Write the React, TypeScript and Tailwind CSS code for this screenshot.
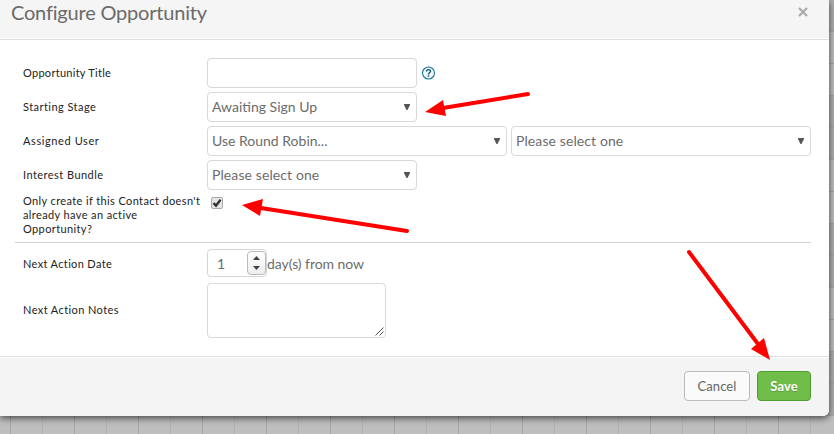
import type { ReactNode } from "react";

const sans = "font-['Lato','Noto_Sans',sans-serif]";

function Label({ children, className = "tracking-[0.38px]" }: { children: ReactNode; className?: string }) {
  return <div className={`w-[184px] shrink-0 whitespace-nowrap text-[11px] leading-[14px] text-[#222] ${className}`}>{children}</div>;
}

function Select({ value, className, tracking }: { value: string; className: string; tracking: string }) {
  return (
    <div className={`flex h-[30px] shrink-0 items-center justify-between rounded-[4px] border border-[#d9d9d9] bg-white pl-1 pr-[6px] ${className}`}>
      <span className={`whitespace-nowrap text-[14px] leading-[20px] text-[#6c6c6c] ${tracking}`}>{value}</span>
      <svg width="6" height="6" viewBox="0 0 6 6" className="-mt-px" aria-hidden="true">
        <path d="M0 0h6v1L3.5 6H2.5L0 1z" fill="#555" />
      </svg>
    </div>
  );
}

function Row({ children, className = "h-[30px]" }: { children: ReactNode; className?: string }) {
  return <div className={`flex items-center pl-[23px] ${className}`}>{children}</div>;
}

function Backdrop() {
  return (
    <svg className="absolute inset-0" width="834" height="434" aria-hidden="true">
      <rect width="834" height="434" fill="#afafaf" />
      {[31, 159, 287, 415].map((y) => (
        <rect key={y} y={y} width="834" height="64" fill="#bebebe" />
      ))}
      {Array.from({ length: 13 }, (_, i) => (
        <rect key={i} x="820" y={31 + i * 32} width="14" height="1" fill="#a6a6a6" />
      ))}
      {Array.from({ length: 26 }, (_, i) => (
        <rect key={i} x={10 + i * 32} y="416" width="1" height="18" fill={i % 2 ? "#b2b2b2" : "#a6a6a6"} />
      ))}
    </svg>
  );
}

function Arrows() {
  return (
    <svg className="pointer-events-none absolute inset-0" width="834" height="434" aria-hidden="true">
      <g stroke="#fe0000" strokeWidth="4" strokeLinecap="round" fill="#fe0000">
        <path d="M528 94L443 108" />
        <path d="M425 112L443 100L446 116Z" stroke="none" />
        <path d="M407 231L261 208" />
        <path d="M242 205L263 199L260 216Z" stroke="none" />
        <path d="M689 252L758 344" />
        <path d="M770 360L751 349L764 338Z" stroke="none" />
      </g>
    </svg>
  );
}

export default function App() {
  return (
    <div className={`relative h-[434px] w-[834px] overflow-hidden ${sans}`}>
      <Backdrop />
      <div className="relative flex h-[416px] w-[829px] flex-col overflow-hidden rounded-br-[6px] bg-white shadow-[0_2px_7px_rgba(0,0,0,0.65)]">
        <header className="flex h-[38px] shrink-0 justify-between bg-[#f5f5f5] pl-[11px] pr-[21px]">
          <h1 className="whitespace-nowrap text-[20px] leading-[25px] tracking-[-0.2px] text-[#6a6a6a]">Configure Opportunity</h1>
          <svg width="10" height="10" viewBox="0 0 10 10" className="mt-[7px]" aria-label="Close">
            <path d="M1 1l8 8M9 1L1 9" stroke="#aaa" strokeWidth="2.2" />
          </svg>
        </header>
        <main className="h-[318px] shrink-0 pt-px">
          <div className="h-px bg-[#ddd]" />
          <div className="flex flex-col gap-1 pt-[18px]">
            <Row>
              <Label className="tracking-[0.28px]">Opportunity Title</Label>
              <div className="h-[30px] w-[210px] rounded-[4px] border border-[#d9d9d9]" />
              <svg width="14" height="14" viewBox="0 0 14 14" className="ml-[5px]" aria-label="Help">
                <circle cx="6.5" cy="7" r="6" fill="#effaff" stroke="#19759c" strokeWidth="1.1" />
                <path d="M4.5 5.5C4.5 3 8.5 3 8.5 5.3C8.5 6.8 6.5 6.7 6.5 8.4M6.5 9.3v1.5" fill="none" stroke="#174f70" strokeWidth="1.4" />
              </svg>
            </Row>
            <Row>
              <Label className="tracking-[0.45px]">Starting Stage</Label>
              <Select value="Awaiting Sign Up" className="w-[210px]" tracking="tracking-[0px]" />
            </Row>
            <Row>
              <Label className="tracking-[0.6px]">Assigned User</Label>
              <Select value="Use Round Robin..." className="w-[300px]" tracking="tracking-[0px]" />
              <Select value="Please select one" className="ml-[4px] w-[300px]" tracking="tracking-[0.1px]" />
            </Row>
            <Row>
              <Label className="tracking-[0.45px]">Interest Bundle</Label>
              <Select value="Please select one" className="w-[210px]" tracking="tracking-[0.1px]" />
            </Row>
          </div>
          <Row className="mt-1 h-[43px] items-start!">
            <Label>
              Only create if this Contact doesn't<br />already have an active<br />Opportunity?
            </Label>
            <svg width="20" height="16" viewBox="0 0 20 16" aria-label="Checked">
              <rect x="4.5" y="3.5" width="11" height="11" rx="1.5" fill="#e6e6e6" stroke="#aaa" />
              <path d="M6.5 9.2L9 11.7L13.5 5.8" fill="none" stroke="#333" strokeWidth="2.4" />
            </svg>
          </Row>
          <div className="ml-[15px] mt-[5px] h-px w-[796px] bg-[#d2d2d2]" />
          <Row className="mt-[6px] h-[28px]">
            <Label className="pt-[2px] tracking-[0.35px]">Next Action Date</Label>
            <div className="flex h-[28px] w-[60px] items-center justify-between rounded-[4px] border border-[#d5d5d5] pl-[9px] text-[14px] text-[#6c6c6c]">
              <span className="pt-px">1</span>
              <div className="flex h-[24px] w-[19px] flex-col items-center justify-between rounded-[4px] border border-[#bbb] bg-linear-to-b from-white to-[#eee] py-[4px]">
                <svg width="7" height="4"><path d="M0 4L3.5 0L7 4Z" fill="#444" /></svg>
                <svg width="7" height="4"><path d="M0 0H7L3.5 4Z" fill="#444" /></svg>
              </div>
            </div>
            <span className="whitespace-nowrap pt-[2px] text-[14px] leading-[20px] tracking-[-0.05px] text-[#6c6c6c]">day(s) from now</span>
          </Row>
          <Row className="mt-[6px] h-[55px]">
            <Label className="pb-px tracking-[0.4px]">Next Action Notes</Label>
            <div className="flex h-[55px] w-[179px] items-end justify-end rounded-[4px] border border-[#d9d9d9] pb-px pr-px">
              <svg width="9" height="9"><path d="M.5 8.5L8.5.5M4.5 8.5L8.5 4.5" stroke="#555" /></svg>
            </div>
          </Row>
        </main>
        <footer className="flex h-[60px] shrink-0 items-start justify-end gap-[7px] border-t border-[#ddd] bg-[#f4f4f4] pr-[18px] pt-[14px] shadow-[inset_0_1px_white]">
          <button className="h-[30px] w-[66px] rounded-[4px] border border-[#bbb] bg-[#fafafa] text-[13px] leading-[20px] tracking-[0.1px] text-[#666]">Cancel</button>
          <button className="h-[30px] w-[54px] rounded-[4px] border border-[#4f9d2c] bg-[#70bd4a] text-[13px] font-bold leading-[20px] tracking-[0.1px] text-white [text-shadow:0_1px_1px_rgba(0,0,0,0.2)]">Save</button>
        </footer>
      </div>
      <Arrows />
    </div>
  );
}
